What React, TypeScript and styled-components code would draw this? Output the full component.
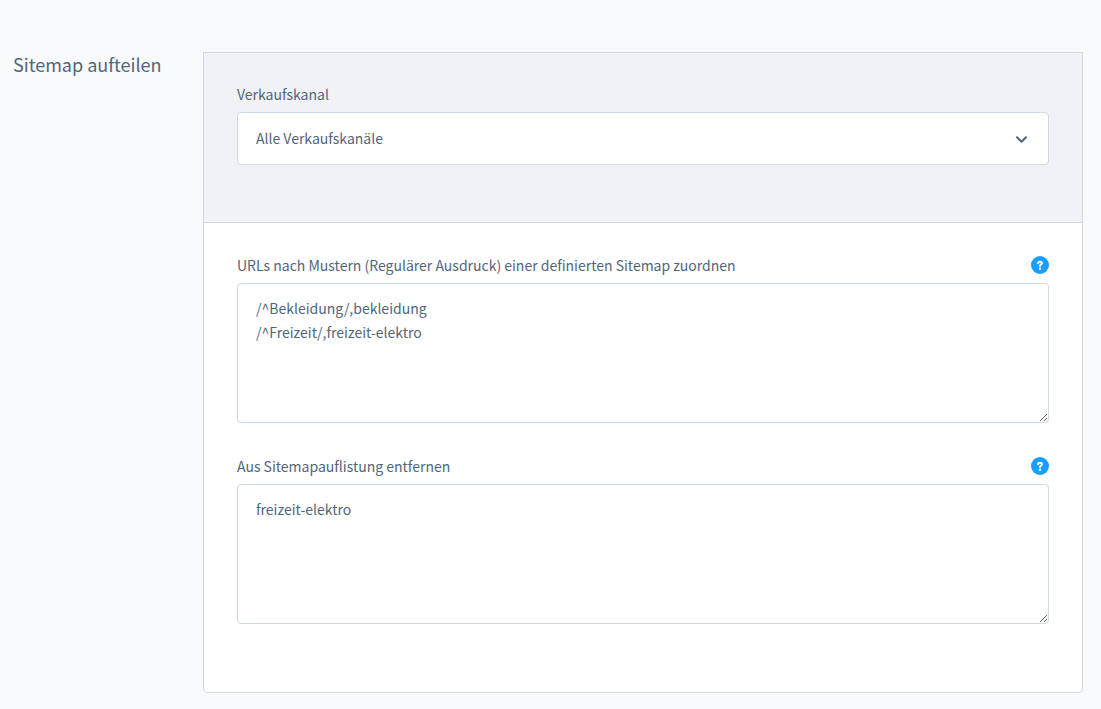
import React, { useState } from 'react';
import styled, { createGlobalStyle } from 'styled-components';

const GlobalStyle = createGlobalStyle`
  *, *::before, *::after { box-sizing: border-box; }
  body {
    margin: 0;
    background: #f9fafb;
    color: #52667a;
    font-family: "Source Sans Pro", "Noto Sans CJK SC", "Noto Sans", sans-serif;
    font-size: 14px;
    line-height: 24px;
  }
`;

const Page = styled.main`
  display: grid;
  grid-template-columns: 190px minmax(0, 1fr);
  align-items: start;
  padding: 52px 18px 16px 13px;
`;

const Title = styled.h2`
  margin: 0;
  font-size: 18px;
  font-weight: 400;
  line-height: 24px;
`;

const Card = styled.section`
  background: #fff;
  border: 1px solid #d1d9e0;
  border-radius: 0 0 4px 4px;
`;

const ChannelArea = styled.div`
  padding: 29px 33px 57px;
  background: #f0f2f5;
  border-bottom: 1px solid #d1d9e0;
`;

const FieldsArea = styled.div`
  display: flex;
  flex-direction: column;
  gap: 31px;
  padding: 30px 33px 68px;
`;

const Field = styled.div`
  display: flex;
  flex-direction: column;
  gap: 6px;
`;

const FieldHeader = styled.div`
  display: flex;
  align-items: center;
  justify-content: space-between;
  height: 24px;
`;

const HelpButton = styled.button`
  display: block;
  width: 18px;
  height: 18px;
  padding: 0;
  border: 0;
  border-radius: 50%;
  background: none;
  cursor: pointer;

  svg { display: block; }
`;

const SelectWrap = styled.div`
  position: relative;
  display: flex;
`;

const Select = styled.select`
  appearance: none;
  width: 100%;
  height: 53px;
  padding: 0 48px 2px 18px;
  border: 1px solid #d1d9e0;
  border-radius: 4px;
  background: #fff;
  color: inherit;
  font: inherit;
`;

const Chevron = styled.svg`
  position: absolute;
  top: 20px;
  right: 20px;
  pointer-events: none;
`;

const TextArea = styled.textarea`
  display: block;
  width: 100%;
  height: 140px;
  margin: 0;
  padding: 12px 18px;
  border: 1px solid #d1d9e0;
  border-radius: 4px;
  background: #fff;
  color: inherit;
  font: inherit;
  resize: vertical;
`;

function HelpIcon() {
  return (
    <svg width="18" height="18" viewBox="0 0 18 18" fill="none" aria-hidden="true">
      <circle cx="9" cy="9" r="9" fill="#189eff" />
      <path
        d="M7 7.2C7.1 6.3 7.9 5.8 9 5.8s2 .6 2 1.5c0 1.2-2 1.3-2 2.6"
        stroke="#fff"
        strokeWidth="2"
        strokeLinecap="round"
      />
      <circle cx="9" cy="12.8" r="1.2" fill="#fff" />
    </svg>
  );
}

interface TextFieldProps {
  id: string;
  label: string;
  initial: string;
}

function TextField({ id, label, initial }: TextFieldProps) {
  const [value, setValue] = useState(initial);
  return (
    <Field>
      <FieldHeader>
        <label htmlFor={id}>{label}</label>
        <HelpButton type="button" aria-label="Hilfe">
          <HelpIcon />
        </HelpButton>
      </FieldHeader>
      <TextArea id={id} value={value} spellCheck={false} onChange={(e) => setValue(e.target.value)} />
    </Field>
  );
}

export default function App() {
  return (
    <>
      <GlobalStyle />
      <Page>
        <Title>Sitemap aufteilen</Title>
        <Card>
          <ChannelArea>
            <Field>
              <FieldHeader>
                <label htmlFor="channel">Verkaufskanal</label>
              </FieldHeader>
              <SelectWrap>
                <Select id="channel" defaultValue="all">
                  <option value="all">Alle Verkaufskanäle</option>
                </Select>
                <Chevron width="14" height="14" viewBox="0 0 14 14" fill="none" aria-hidden="true">
                  <path
                    d="M2 5.2 6.5 9.7 11 5.2"
                    stroke="#52667a"
                    strokeWidth="2"
                    strokeLinecap="round"
                    strokeLinejoin="round"
                  />
                </Chevron>
              </SelectWrap>
            </Field>
          </ChannelArea>
          <FieldsArea>
            <TextField
              id="patterns"
              label="URLs nach Mustern (Regulärer Ausdruck) einer definierten Sitemap zuordnen"
              initial={'/^Bekleidung/,bekleidung\n/^Freizeit/,freizeit-elektro'}
            />
            <TextField id="excluded" label="Aus Sitemapauflistung entfernen" initial="freizeit-elektro" />
          </FieldsArea>
        </Card>
      </Page>
    </>
  );
}
